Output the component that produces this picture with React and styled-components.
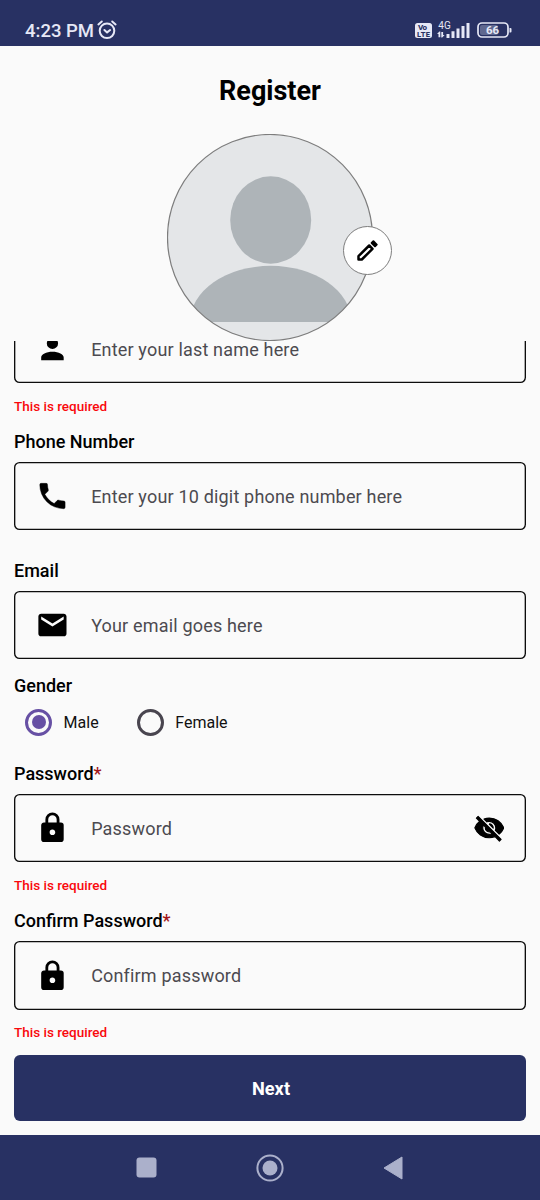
import React from 'react';
import styled, { createGlobalStyle } from 'styled-components';

const NAVY = '#283163';

const Global = createGlobalStyle`
  * { box-sizing: border-box; }
  body { margin: 0; background: #fafafa; font-family: Roboto, "Liberation Sans", sans-serif; color: #000; }
`;

const Screen = styled.div`
  width: 540px;
  height: 1200px;
  display: flex;
  flex-direction: column;
  overflow: hidden;
  background: #fafafa;
`;

const StatusBar = styled.header`
  flex: none;
  height: 46px;
  padding: 15px 28px 0 25px;
  display: flex;
  justify-content: space-between;
  background: ${NAVY};
  color: #e6e8f6;
`;

const Clock = styled.div`
  display: flex;
  gap: 2px;
  height: 32px;
  font-size: 18.5px;
  font-weight: 500;
  line-height: 32px;
  svg { margin-top: 4px; }
`;

const Indicators = styled.div`
  display: flex;
  align-items: flex-start;
`;

const Header = styled.div`
  flex: none;
  height: 295px;
  display: flex;
  flex-direction: column;
  align-items: center;
`;

const Title = styled.h1`
  margin: 29px 0 27px;
  font-size: 27px;
  line-height: 32px;
  font-weight: 700;
`;

const Avatar = styled.div`
  position: relative;
  z-index: 1;
  width: 206px;
  height: 207px;
  > svg { display: block; }
`;

const EditButton = styled.button`
  position: absolute;
  left: 176px;
  top: 92px;
  width: 49px;
  height: 49px;
  padding: 0;
  display: grid;
  place-items: center;
  border: 1px solid #7d7d7d;
  border-radius: 50%;
  background: #fff;
  color: #000;
`;

const FormViewport = styled.main`
  flex: 1;
  min-height: 0;
  overflow: hidden;
  padding: 0 14px;
  display: flex;
  flex-direction: column;
  justify-content: flex-end;
`;

const Label = styled.label`
  flex: none;
  height: 39.8px;
  padding-top: 8px;
  font-size: 18px;
  line-height: 24px;
  font-weight: 500;
  white-space: nowrap;
`;

const GroupLabel = styled(Label)`
  height: 42px;
  padding-top: 15px;
`;

const Star = styled.span`
  color: #a3161a;
`;

const Field = styled.div`
  flex: none;
  height: 68.6px;
  display: flex;
  align-items: center;
  padding: 0 22px 0 21.2px;
  box-shadow: inset 0 0 0 1.35px #0c0c0c;
  border-radius: 5.5px;
`;

const Placeholder = styled.span`
  flex: 1;
  margin-left: 22.2px;
  padding-top: 2px;
  font-size: 18px;
  line-height: 24px;
  letter-spacing: 0.18px;
  color: #4c4a50;
`;

const Message = styled.div`
  flex: none;
  height: ${(p) => p.$h}px;
  padding-top: 12.6px;
  font-size: 13.5px;
  font-weight: 500;
  line-height: 20px;
  color: #f9080c;
`;

const RadioRow = styled.div`
  flex: none;
  height: 52.6px;
  padding: 6.5px 0 0 11px;
  display: flex;
  align-items: flex-start;
  gap: 38px;
`;

const RadioOption = styled.div`
  display: flex;
  align-items: center;
  gap: 11.6px;
  font-size: 16px;
  line-height: 29px;
  color: #111;
`;

const Radio = styled.span`
  width: 27px;
  height: 27px;
  display: grid;
  place-items: center;
  border: 3px solid ${(p) => (p.$on ? '#6750a4' : '#49454f')};
  border-radius: 50%;
  &::after {
    content: '';
    width: 14px;
    height: 14px;
    border-radius: 50%;
    background: ${(p) => (p.$on ? '#6750a4' : 'transparent')};
  }
`;

const NextButton = styled.button`
  flex: none;
  height: 65.6px;
  margin-bottom: 14px;
  padding: 0 0 0 2px;
  border: 0;
  border-radius: 6px;
  background: ${NAVY};
  color: #fff;
  font: 700 18.2px Roboto, sans-serif;
`;

const NavBar = styled.nav`
  flex: none;
  height: 65px;
  padding: 0 137px 0 136px;
  display: flex;
  align-items: center;
  justify-content: space-between;
  background: ${NAVY};
`;

const ICONS = {
  account: 'M12,4A4,4 0 0,1 16,8A4,4 0 0,1 12,12A4,4 0 0,1 8,8A4,4 0 0,1 12,4M12,14C16.42,14 20,15.79 20,18V20H4V18C4,15.79 7.58,14 12,14Z',
  phone: 'M6.62,10.79C8.06,13.62 10.38,15.94 13.21,17.38L15.41,15.18C15.69,14.9 16.08,14.82 16.43,14.93C17.55,15.3 18.75,15.5 20,15.5A1,1 0 0,1 21,16.5V20A1,1 0 0,1 20,21A17,17 0 0,1 3,4A1,1 0 0,1 4,3H7.5A1,1 0 0,1 8.5,4C8.5,5.25 8.7,6.45 9.07,7.57C9.18,7.92 9.1,8.31 8.82,8.59L6.62,10.79Z',
  email: 'M20,8L12,13L4,8V6L12,11L20,6M20,4H4C2.89,4 2,4.89 2,6V18A2,2 0 0,0 4,20H20A2,2 0 0,0 22,18V6C22,4.89 21.1,4 20,4Z',
  lock: 'M12,17A2,2 0 0,0 14,15C14,13.89 13.1,13 12,13A2,2 0 0,0 10,15A2,2 0 0,0 12,17M18,8A2,2 0 0,1 20,10V20A2,2 0 0,1 18,22H6A2,2 0 0,1 4,20V10C4,8.89 4.9,8 6,8H7V6A5,5 0 0,1 12,1A5,5 0 0,1 17,6V8H18M12,3A3,3 0 0,0 9,6V8H15V6A3,3 0 0,0 12,3Z',
  eyeOff: 'M11.83,9L15,12.16C15,12.11 15,12.05 15,12A3,3 0 0,0 12,9C11.94,9 11.89,9 11.83,9M7.53,9.8L9.08,11.35C9.03,11.56 9,11.77 9,12A3,3 0 0,0 12,15C12.22,15 12.44,14.97 12.65,14.92L14.2,16.47C13.53,16.8 12.79,17 12,17A5,5 0 0,1 7,12C7,11.21 7.2,10.47 7.53,9.8M2,4.27L4.28,6.55L4.73,7C3.08,8.3 1.78,10 1,12C2.73,16.39 7,19.5 12,19.5C13.55,19.5 15.03,19.2 16.38,18.66L16.81,19.08L19.73,22L21,20.73L3.27,3M12,7A5,5 0 0,1 17,12C17,12.64 16.87,13.26 16.64,13.82L19.57,16.75C21.07,15.5 22.27,13.86 23,12C21.27,7.61 17,4.5 12,4.5C10.6,4.5 9.26,4.75 8,5.2L10.17,7.35C10.74,7.13 11.35,7 12,7Z',
};

const FieldIcon = ({ name, size = 33.75, weight = 0 }) => (
  <svg width={size} height={size} viewBox="-0.4 -0.1 24 24">
    <path d={ICONS[name]} stroke="#000" strokeWidth={weight} strokeLinejoin="round" />
  </svg>
);

const InputField = ({ icon, weight, text, children }) => (
  <Field>
    <FieldIcon name={icon} weight={weight} />
    <Placeholder>{text}</Placeholder>
    {children}
  </Field>
);

export default function App() {
  return (
    <Screen>
      <Global />
      <StatusBar>
        <Clock>
          4:23 PM
          <svg width="22" height="22" viewBox="0 0 22 22" fill="none" stroke="#e6e8f6" strokeWidth="2" strokeLinecap="round" strokeLinejoin="round">
            <circle cx="11" cy="11.8" r="7.3" />
            <path d="M8.4 11l2.7 2.4 3-2.4M2.4 5.4l3.4-2.9M19.6 5.4l-3.4-2.9" />
          </svg>
        </Clock>
        <Indicators>
          <svg width="98" height="30" viewBox="414 15 98 30" fill="#e6e8f6" fontFamily="Roboto, sans-serif">
            <rect x="415" y="23" width="17" height="15" rx="2.5" />
            <text x="418" y="30" fontSize="8" fontWeight="800" fill={NAVY} textLength="9">Vo</text>
            <text x="417" y="37" fontSize="7.5" fontWeight="800" fill={NAVY} textLength="13">LTE</text>
            <text x="438.3" y="29" fontSize="10">4G</text>
            <path d="M439.4 31.5l-2.4 2.6h1.5v3.2h1.8v-5.8zM442.2 37.5l2.4-2.6h-1.5v-3h-1.8v5.6z" />
            <path d="M446.5 34h3v4h-3zM451.5 31.3h3V38h-3zM456.5 28.5h3V38h-3zM461.5 26h3v12h-3zM466.5 23h3v15h-3z" />
            <rect x="478" y="23" width="30" height="14" rx="4" fill="none" stroke="#e6e8f6" strokeWidth="1.7" />
            <rect x="480" y="25" width="18" height="10" rx="2" opacity=".3" />
            <path d="M509.5 28h1q1 0 1 1v2.5q0 1-1 1h-1z" />
            <text x="486" y="34.3" fontSize="11.5" fontWeight="700">66</text>
          </svg>
        </Indicators>
      </StatusBar>

      <Header>
        <Title>Register</Title>
        <Avatar>
          <svg width="206" height="207" viewBox="0 0 206 207">
            <defs><clipPath id="round"><ellipse cx="103" cy="103.5" rx="102.5" ry="103" /></clipPath></defs>
            <g clipPath="url(#round)">
              <rect width="206" height="207" fill="#e4e6e8" />
              <ellipse cx="103.7" cy="86" rx="40.5" ry="43.7" fill="#aeb4b8" />
              <path d="M23 188A80.7 56.2 0 0 1 184.4 188z" fill="#aeb4b8" />
            </g>
            <ellipse cx="103" cy="103.5" rx="102.5" ry="103" fill="none" stroke="#7d7d7d" strokeWidth="1.2" />
          </svg>
          <EditButton aria-label="Edit picture">
            <svg width="21" height="21" viewBox="0 0 21 21" stroke="#000" strokeLinejoin="round">
              <path d="M1.5 19.5v-3.3L12.2 5.5l3.3 3.3L4.8 19.5z" fill="none" strokeWidth="2.5" />
              <path d="M14.7 3l1.7-1.7 3.3 3.3L18 6.3z" strokeWidth="2" />
            </svg>
          </EditButton>
        </Avatar>
      </Header>

      <FormViewport>
        <InputField icon="account" text="Enter your last name here" />
        <Message $h={39}>This is required</Message>
        <Label>Phone Number</Label>
        <InputField icon="phone" weight={0.3} text="Enter your 10 digit phone number here" />
        <Message $h={20.6} />
        <Label>Email</Label>
        <InputField icon="email" text="Your email goes here" />
        <GroupLabel>Gender</GroupLabel>
        <RadioRow>
          <RadioOption><Radio $on />Male</RadioOption>
          <RadioOption><Radio />Female</RadioOption>
        </RadioRow>
        <Label>Password<Star>*</Star></Label>
        <InputField icon="lock" text="Password"><FieldIcon name="eyeOff" size={31.5} weight={0.9} /></InputField>
        <Message $h={39}>This is required</Message>
        <Label>Confirm Password<Star>*</Star></Label>
        <InputField icon="lock" text="Confirm password" />
        <Message $h={45.7}>This is required</Message>
        <NextButton>Next</NextButton>
      </FormViewport>

      <NavBar>
        <svg width="21" height="21" viewBox="0 0 21 21"><rect x=".5" y=".5" width="20" height="20" rx="3" fill="#abb0cb" /></svg>
        <svg width="28" height="28" viewBox="0 0 28 28"><circle cx="14" cy="14" r="12.6" fill="none" stroke="#abb0cb" strokeWidth="2" /><circle cx="14" cy="14" r="7.5" fill="#abb0cb" /></svg>
        <svg width="20" height="24" viewBox="0 0 20 24"><path d="M1 12L19 1V23z" fill="#abb0cb" stroke="#abb0cb" strokeLinejoin="round" /></svg>
      </NavBar>
    </Screen>
  );
}
